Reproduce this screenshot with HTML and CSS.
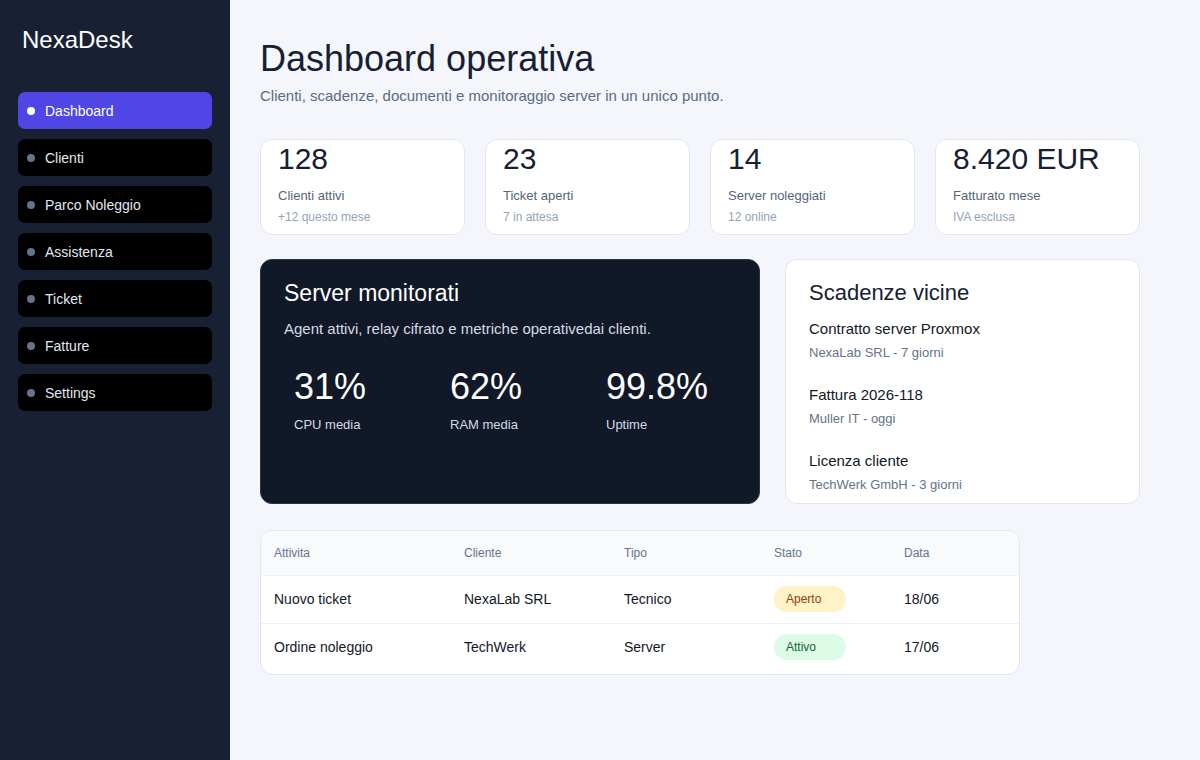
FILE: index.html
```html
<!DOCTYPE html>
<html>
  <head>
    <title>NexaDesk - Dashboard</title>
    <link rel="stylesheet" href="styles.css">
  </head>
  <body>
    <div class="layout">
      <aside class="sidebar">
        <div class="logo">NexaDesk</div>
        <nav class="nav">
          <a class="nav-item active" href="#"><span class="dot"></span>Dashboard</a>
          <a class="nav-item" href="#"><span class="dot"></span>Clienti</a>
          <a class="nav-item" href="#"><span class="dot"></span>Parco Noleggio</a>
          <a class="nav-item" href="#"><span class="dot"></span>Assistenza</a>
          <a class="nav-item" href="#"><span class="dot"></span>Ticket</a>
          <a class="nav-item" href="#"><span class="dot"></span>Fatture</a>
          <a class="nav-item" href="#"><span class="dot"></span>Settings</a>
        </nav>
      </aside>

      <main class="main">
        <h1 class="page-title">Dashboard operativa</h1>
        <p class="page-sub">Clienti, scadenze, documenti e monitoraggio server in un unico punto.</p>

        <section class="stats">
          <div class="stat-card">
            <div class="stat-value">128</div>
            <div class="stat-label">Clienti attivi</div>
            <div class="stat-note">+12 questo mese</div>
          </div>
          <div class="stat-card">
            <div class="stat-value">23</div>
            <div class="stat-label">Ticket aperti</div>
            <div class="stat-note">7 in attesa</div>
          </div>
          <div class="stat-card">
            <div class="stat-value">14</div>
            <div class="stat-label">Server noleggiati</div>
            <div class="stat-note">12 online</div>
          </div>
          <div class="stat-card">
            <div class="stat-value">8.420 EUR</div>
            <div class="stat-label">Fatturato mese</div>
            <div class="stat-note">IVA esclusa</div>
          </div>
        </section>

        <section class="panels">
          <div class="panel panel-dark">
            <h2 class="panel-title">Server monitorati</h2>
            <p class="panel-desc">Agent attivi, relay cifrato e metriche operativedai clienti.</p>
            <div class="metrics">
              <div class="metric">
                <div class="metric-value">31%</div>
                <div class="metric-label">CPU media</div>
              </div>
              <div class="metric">
                <div class="metric-value">62%</div>
                <div class="metric-label">RAM media</div>
              </div>
              <div class="metric">
                <div class="metric-value">99.8%</div>
                <div class="metric-label">Uptime</div>
              </div>
            </div>
          </div>

          <div class="panel panel-light">
            <h2 class="panel-title">Scadenze vicine</h2>
            <div class="deadlines">
              <div class="deadline">
                <div class="deadline-name">Contratto server Proxmox</div>
                <div class="deadline-meta">NexaLab SRL - 7 giorni</div>
              </div>
              <div class="deadline">
                <div class="deadline-name">Fattura 2026-118</div>
                <div class="deadline-meta">Muller IT - oggi</div>
              </div>
              <div class="deadline">
                <div class="deadline-name">Licenza cliente</div>
                <div class="deadline-meta">TechWerk GmbH - 3 giorni</div>
              </div>
            </div>
          </div>
        </section>

        <div class="table-card">
          <table class="activity">
            <thead>
              <tr>
                <th class="col-1">Attivita</th>
                <th class="col-2">Cliente</th>
                <th class="col-3">Tipo</th>
                <th class="col-4">Stato</th>
                <th>Data</th>
              </tr>
            </thead>
            <tbody>
              <tr>
                <td>Nuovo ticket</td>
                <td>NexaLab SRL</td>
                <td>Tecnico</td>
                <td><span class="badge badge-open">Aperto</span></td>
                <td>18/06</td>
              </tr>
              <tr class="last-row">
                <td>Ordine noleggio</td>
                <td>TechWerk</td>
                <td>Server</td>
                <td><span class="badge badge-active">Attivo</span></td>
                <td>17/06</td>
              </tr>
            </tbody>
          </table>
        </div>
      </main>
    </div>
  </body>
</html>
```

FILE: styles.css
```css
* {
  box-sizing: border-box;
}
body {
  margin: 0;
  font-family: "Liberation Sans", Arial, sans-serif;
  background-color: #f4f6fb;
  color: #0f172a;
}
.layout {
  display: flex;
  min-height: 760px;
}

/* Sidebar */
.sidebar {
  width: 230px;
  flex-shrink: 0;
  background-color: #182033;
  padding: 27px 18px 20px 18px;
}
.logo {
  font-size: 24px;
  line-height: 25px;
  color: #ffffff;
  padding-left: 4px;
  margin-bottom: 40px;
}
.nav {
  display: flex;
  flex-direction: column;
  gap: 10px;
}
.nav-item {
  display: flex;
  align-items: center;
  gap: 10px;
  height: 37px;
  padding-left: 9px;
  border-radius: 7px;
  background-color: #000000;
  color: #e2e8f0;
  font-size: 14px;
  text-decoration: none;
}
.nav-item .dot {
  width: 8px;
  height: 8px;
  border-radius: 50%;
  background-color: #64748b;
}
.nav-item.active {
  background-color: #4f46e5;
  color: #ffffff;
}
.nav-item.active .dot {
  background-color: #ffffff;
}

/* Main */
.main {
  flex: 1;
  padding: 38px 60px 30px 30px;
}
.page-title {
  margin: 0;
  font-size: 36px;
  line-height: 42px;
  font-weight: normal;
  color: #172033;
}
.page-sub {
  margin: 6px 0 0 0;
  font-size: 15px;
  line-height: 20px;
  color: #5b6b84;
}

.stats {
  display: grid;
  grid-template-columns: repeat(4, 1fr);
  gap: 20px;
  margin-top: 33px;
}
.stat-card {
  background-color: #ffffff;
  border: 1px solid #e1e6f0;
  border-radius: 12px;
  padding: 2px 17px 9px 17px;
}
.stat-value {
  font-size: 30px;
  line-height: 34px;
  color: #172033;
}
.stat-label {
  margin-top: 11px;
  font-size: 13px;
  line-height: 18px;
  color: #56647a;
}
.stat-note {
  margin-top: 4px;
  font-size: 12px;
  line-height: 16px;
  color: #94a3b8;
}

.panels {
  display: grid;
  grid-template-columns: 500px 1fr;
  gap: 25px;
  margin-top: 24px;
}
.panel {
  border-radius: 12px;
  padding: 20px 23px 9px 23px;
}
.panel-dark {
  background-color: #111827;
  border: 1px solid #2b3445;
  color: #ffffff;
}
.panel-light {
  background-color: #ffffff;
  border: 1px solid #e1e6f0;
}
.panel-title {
  margin: 0;
  font-size: 22px;
  line-height: 26px;
  font-weight: normal;
}
.panel-dark .panel-title {
  font-size: 23px;
}
.panel-light .panel-title {
  color: #172033;
}
.panel-desc {
  margin: 13px 0 0 0;
  font-size: 15px;
  line-height: 20px;
  color: #d5dbe5;
}
.metrics {
  display: grid;
  grid-template-columns: repeat(3, 1fr);
  gap: 16px;
  margin-top: 19px;
}
.metric {
  padding: 9px 10px;
}
.metric-value {
  font-size: 36px;
  line-height: 40px;
}
.metric-label {
  margin-top: 9px;
  font-size: 13px;
  line-height: 18px;
  color: #d5dbe5;
}

.deadlines {
  display: flex;
  flex-direction: column;
  gap: 23px;
  margin-top: 13px;
}
.deadline-name {
  font-size: 15px;
  line-height: 20px;
  color: #111827;
}
.deadline-meta {
  margin-top: 5px;
  font-size: 13px;
  line-height: 18px;
  color: #64748b;
}

/* Activity table */
.table-card {
  width: 760px;
  margin-top: 26px;
  background-color: #ffffff;
  border: 1px solid #e1e6f0;
  border-radius: 12px;
  overflow: hidden;
}
.activity {
  width: 100%;
  border-collapse: collapse;
}
.activity th {
  height: 44px;
  padding: 0 13px;
  text-align: left;
  font-size: 12px;
  font-weight: normal;
  color: #64748b;
  background-color: #f8fafc;
}
.activity td {
  height: 48px;
  padding: 0 13px;
  font-size: 14px;
  color: #111827;
  border-top: 1px solid #eef2f7;
}
.activity .last-row td {
  height: 51px;
  padding-bottom: 3px;
}
.activity .col-1 {
  width: 190px;
}
.activity .col-2 {
  width: 160px;
}
.activity .col-3 {
  width: 150px;
}
.activity .col-4 {
  width: 130px;
}
.badge {
  display: inline-block;
  width: 72px;
  height: 26px;
  line-height: 26px;
  padding-left: 12px;
  border-radius: 13px;
  font-size: 12px;
}
.badge-open {
  background-color: #fef3c7;
  color: #92400e;
}
.badge-active {
  background-color: #dcfce7;
  color: #166534;
}
```
